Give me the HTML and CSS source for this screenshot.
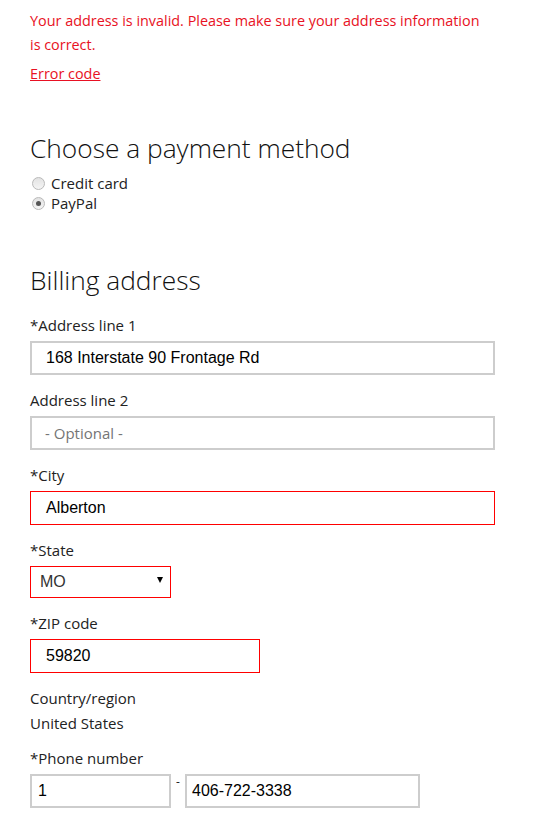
FILE: index.html
```html
<!DOCTYPE html>
<html lang="en">
<head>
<meta charset="utf-8">
<title>Billing</title>
<link rel="stylesheet" href="styles.css">
</head>
<body>
<div class="page">
  <div class="error">
    <p class="error-msg">Your address is invalid. Please make sure your address information is correct.</p>
    <a class="error-link" href="#">Error code</a>
  </div>

  <h2 class="heading heading-pay">Choose a payment method</h2>
  <div class="radios">
    <label class="radio-row"><span class="radio"></span>Credit card</label>
    <label class="radio-row"><span class="radio checked"></span>PayPal</label>
  </div>

  <h2 class="heading heading-billing">Billing address</h2>

  <div class="field">
    <div class="label">*Address line 1</div>
    <div class="input wide">168 Interstate 90 Frontage Rd</div>
  </div>
  <div class="field">
    <div class="label">Address line 2</div>
    <div class="input wide placeholder">- Optional -</div>
  </div>
  <div class="field">
    <div class="label">*City</div>
    <div class="input wide invalid">Alberton</div>
  </div>
  <div class="field">
    <div class="label">*State</div>
    <div class="select invalid"><span class="select-value">MO</span><span class="caret"></span></div>
  </div>
  <div class="field">
    <div class="label">*ZIP code</div>
    <div class="input zip invalid">59820</div>
  </div>
  <div class="field country">
    <div class="label">Country/region</div>
    <div class="value">United States</div>
  </div>
  <div class="field">
    <div class="label">*Phone number</div>
    <div class="phone">
      <div class="input cc">1</div>
      <span class="dash">-</span>
      <div class="input num">406-722-3338</div>
    </div>
  </div>
</div>
</body>
</html>
```

FILE: styles.css
```css
html, body {
  margin: 0;
  padding: 0;
  background: #fff;
}

.page {
  padding: 9px 0 0 30px;
  font-family: "Open Sans", "Noto Sans", sans-serif;
  font-size: 15px;
  color: #222;
}

.error {
  color: #e81123;
  font-size: 14.4px;
  line-height: 24px;
}

.error-msg {
  margin: 0 5px 5px 0;
  max-width: 455px;
}

.error-link {
  color: #e81123;
  text-decoration: underline;
  display: block;
  width: fit-content;
}

.heading {
  font-weight: 300;
  font-size: 26.3px;
  line-height: 36px;
  color: #111;
  margin: 0;
}

.heading-pay {
  margin-top: 44px;
}

.radios {
  margin-top: 7px;
  display: flex;
  flex-direction: column;
}

.radio-row {
  display: flex;
  align-items: center;
  line-height: 20px;
  height: 20px;
  gap: 6px;
}

.radio {
  width: 11px;
  height: 11px;
  border: 1px solid #b9b9b9;
  border-radius: 50%;
  background: linear-gradient(#e3e3e3, #f4f4f4);
  margin-left: 2px;
  position: relative;
  box-sizing: content-box;
}

.radio.checked::after {
  content: "";
  position: absolute;
  left: 3px;
  top: 3px;
  width: 5px;
  height: 5px;
  border-radius: 50%;
  background: #555;
}

.heading-billing {
  margin-top: 49px;
  margin-bottom: 17px;
}

.field {
  margin-bottom: 15px;
}

.label {
  line-height: 20px;
  margin-bottom: 6px;
}

.input {
  box-sizing: border-box;
  height: 34px;
  border: 2px solid #cdcdcd;
  font-family: "Liberation Sans", Arial, sans-serif;
  font-size: 16px;
  color: #000;
  line-height: 30px;
  padding-left: 14px;
  white-space: nowrap;
}

.wide {
  width: 465px;
}

.zip {
  width: 230px;
}

.invalid {
  border: 1px solid #f00;
  line-height: 32px;
  padding-left: 15px;
}

.placeholder {
  font-family: "Open Sans", "Noto Sans", sans-serif;
  font-size: 15px;
  color: #757575;
  padding-left: 13px;
}

.select {
  box-sizing: border-box;
  width: 141px;
  height: 32px;
  display: flex;
  align-items: center;
  justify-content: space-between;
  padding: 0 7px 0 9px;
  font-family: "Liberation Sans", Arial, sans-serif;
  font-size: 16px;
  color: #333;
}

.caret {
  width: 0;
  height: 0;
  border-left: 3.5px solid transparent;
  border-right: 3.5px solid transparent;
  border-top: 6px solid #000;
  margin-top: -4px;
}

.country .label {
  margin-bottom: 5px;
}

.value {
  line-height: 20px;
}

.phone {
  display: flex;
  align-items: flex-start;
}

.cc {
  width: 141px;
  padding-left: 6px;
}

.dash {
  width: 14px;
  text-align: center;
  line-height: 20px;
  font-size: 12px;
  margin-top: -2px;
}

.num {
  width: 235px;
  padding-left: 5px;
}
```
